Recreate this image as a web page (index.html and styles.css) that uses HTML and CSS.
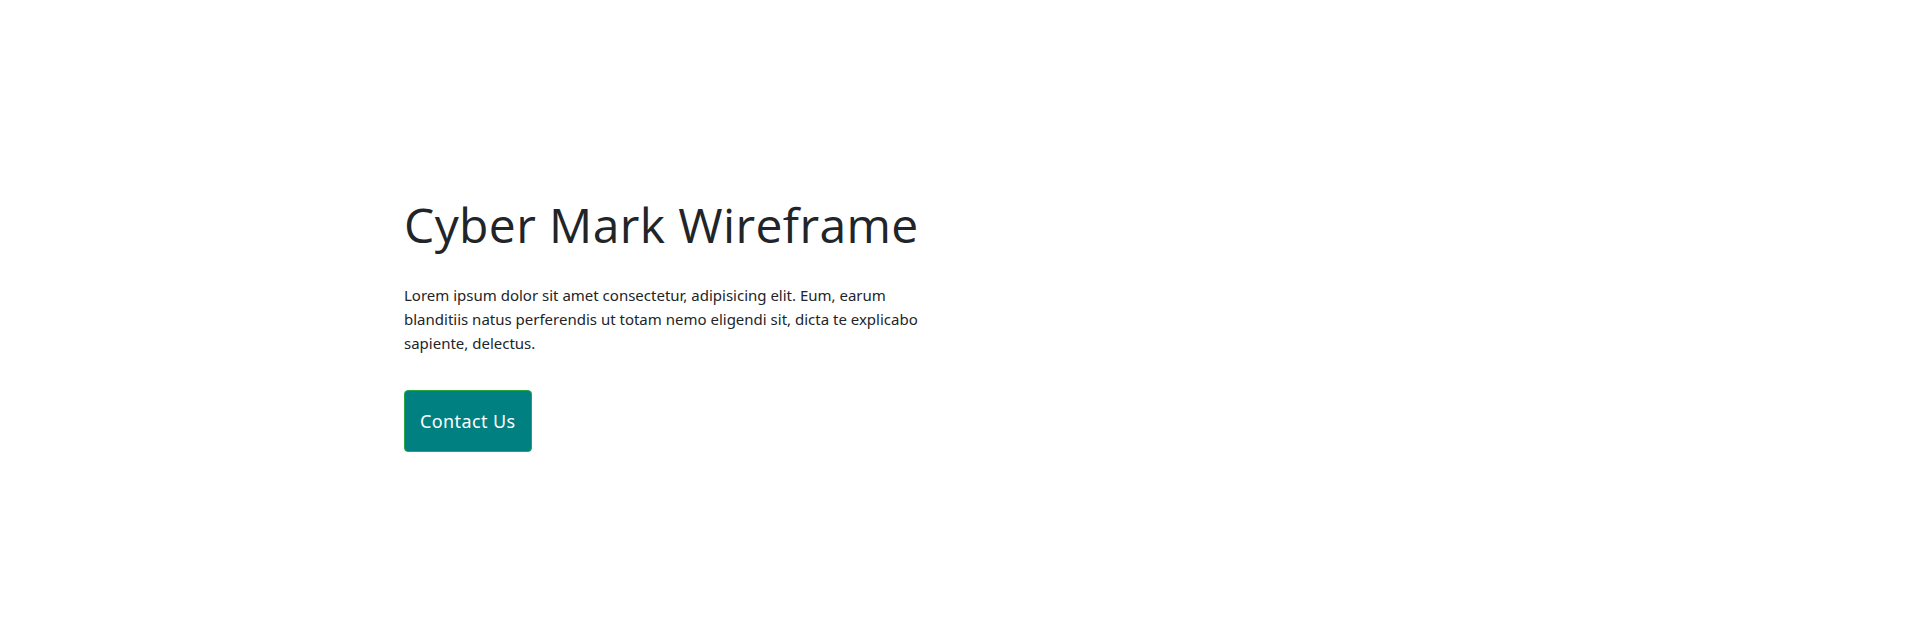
FILE: index.html
```html
<!DOCTYPE html>
<html lang="en">
<head>
<meta charset="utf-8">
<title>Cyber Mark Wireframe</title>
<link rel="stylesheet" href="styles.css">
</head>
<body>
<section class="hero">
  <div class="container">
    <div class="col">
      <h1 class="title">Cyber Mark Wireframe</h1>
      <p class="lead">Lorem ipsum dolor sit amet consectetur, adipisicing elit. Eum, earum blanditiis natus perferendis ut totam nemo eligendi sit, dicta te explicabo sapiente, delectus.</p>
      <a class="btn" href="#">Contact Us</a>
    </div>
  </div>
</section>
</body>
</html>
```

FILE: styles.css
```css
* { box-sizing: border-box; }
html, body { margin: 0; padding: 0; background: #fff; }
body {
  font-family: "Noto Sans", "Open Sans", sans-serif;
  color: #212529;
  width: 1918px;
  height: 630px;
  overflow: hidden;
}
.hero {
  height: 630px;
  padding-top: 196px;
}
.container {
  width: 1140px;
  margin: 0 auto;
  padding: 0 15px;
}
.col {
  width: 540px;
}
.title {
  font-family: "Open Sans", sans-serif;
  font-weight: 400;
  font-size: 48px;
  line-height: 57.6px;
  letter-spacing: 0.4px;
  white-space: nowrap;
  margin: 0 0 29.4px;
}
.lead {
  font-size: 15px;
  line-height: 24px;
  margin: 0 0 35px;
}
.btn {
  display: inline-block;
  background: #008080;
  border: 1px solid #28a745;
  border-radius: 4px;
  color: #fff;
  text-decoration: none;
  font-size: 18px;
  letter-spacing: 0.4px;
  line-height: 30px;
  padding: 15px 15px;
}
```
